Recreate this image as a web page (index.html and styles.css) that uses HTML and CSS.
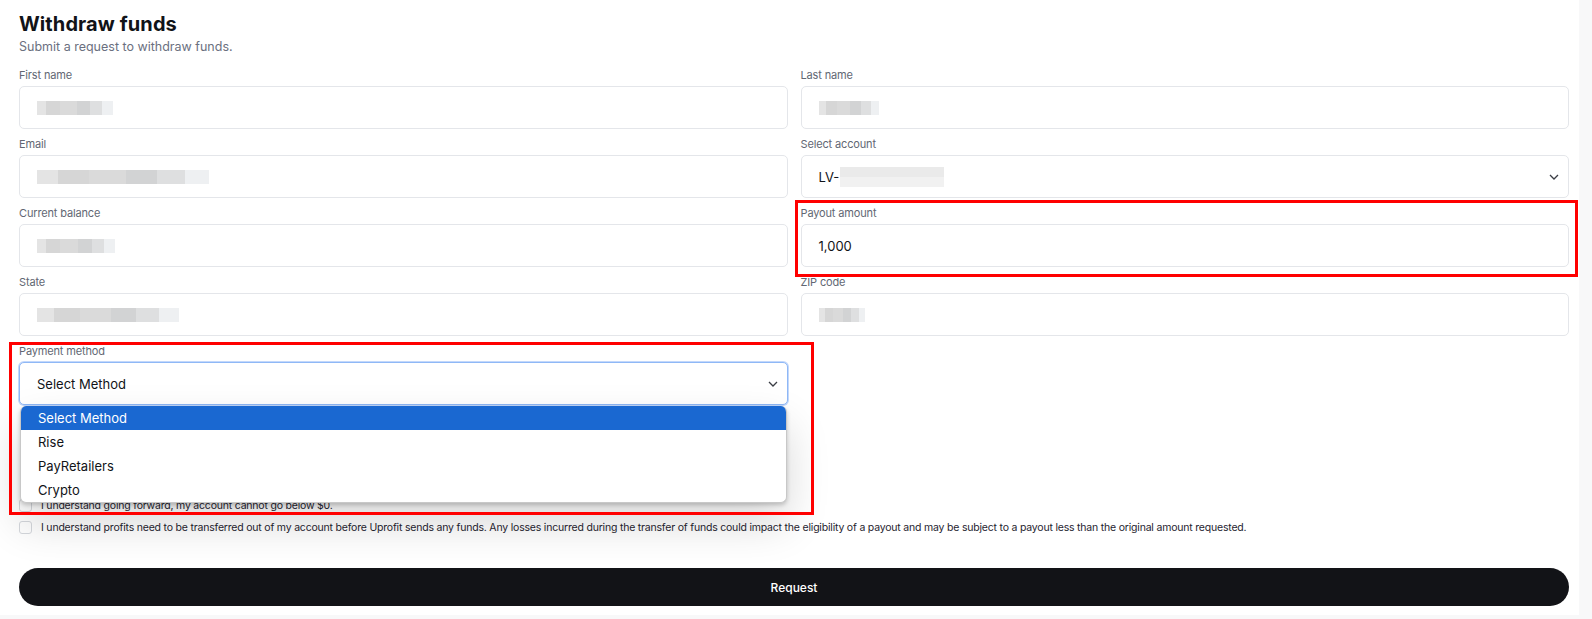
FILE: index.html
```html
<!DOCTYPE html>
<html lang="en">
<head>
    <meta charset="UTF-8" />
    <meta name="viewport" content="width=device-width, initial-scale=1.0"/>
    <title>Withdraw funds</title>
    <link rel="stylesheet" href="styles.css">
</head>
<body>

    <div class="card">
        <div class="title">Withdraw funds</div>
        <div class="subtitle">Submit a request to withdraw funds.</div>

        <div class="form-grid">
            <div class="field">
                <div class="label">First name</div>
                <div class="input"><span class="redact r-first"></span></div>
            </div>
            <div class="field">
                <div class="label">Last name</div>
                <div class="input"><span class="redact r-last"></span></div>
            </div>

            <div class="field">
                <div class="label">Email</div>
                <div class="input"><span class="redact r-email"></span></div>
            </div>
            <div class="field">
                <div class="label">Select account</div>
                <div class="input select">
                    <span class="value">LV-</span><span class="redact r-account"></span>
                    <svg class="chevron" width="10" height="6" viewBox="0 0 10 6"><path d="M1 1l4 4 4-4" fill="none" stroke="#3a3d44" stroke-width="1.3"/></svg>
                </div>
            </div>

            <div class="field">
                <div class="label">Current balance</div>
                <div class="input"><span class="redact r-balance"></span></div>
            </div>
            <div class="field marked marked-payout">
                <div class="label">Payout amount</div>
                <div class="input"><span class="value">1,000</span></div>
            </div>

            <div class="field">
                <div class="label">State</div>
                <div class="input"><span class="redact r-state"></span></div>
            </div>
            <div class="field">
                <div class="label">ZIP code</div>
                <div class="input"><span class="redact r-zip"></span></div>
            </div>

            <!-- select abierto -->
            <div class="field marked marked-method">
                <div class="label">Payment method</div>
                <div class="input select focused">
                    <span class="value">Select Method</span>
                    <svg class="chevron" width="10" height="6" viewBox="0 0 10 6"><path d="M1 1l4 4 4-4" fill="none" stroke="#3a3d44" stroke-width="1.3"/></svg>
                </div>
                <div class="dropdown">
                    <div class="option selected">Select Method</div>
                    <div class="option">Rise</div>
                    <div class="option">PayRetailers</div>
                    <div class="option">Crypto</div>
                </div>
            </div>
        </div>

        <div class="checks">
            <label class="check"><span class="box"></span>I understand going forward, my account cannot go below $0.</label>
            <label class="check"><span class="box"></span>I understand profits need to be transferred out of my account before Uprofit sends any funds. Any losses incurred during the transfer of funds could impact the eligibility of a payout and may be subject to a payout less than the original amount requested.</label>
        </div>

        <button class="request-button">Request</button>
    </div>

</body>
</html>
```

FILE: styles.css
```css
body {
    margin: 0;
    background: #f8f8f9;
    font-family: 'Inter', 'Liberation Sans', sans-serif;
    color: #111318;
}

.card {
    width: 1579px;
    height: 615px;
    box-sizing: border-box;
    background: #ffffff;
    padding: 11px 10px 8px 19px;
}

.title {
    font-size: 20px;
    font-weight: 700;
    line-height: 26px;
    letter-spacing: 0.1px;
}

.subtitle {
    font-size: 12.5px;
    line-height: 20px;
    color: #6b7080;
    margin-bottom: 10px;
}

.form-grid {
    display: grid;
    grid-template-columns: 1fr 1fr;
    column-gap: 13px;
    row-gap: 7px;
}

.field {
    position: relative;
}

.label {
    font-size: 11px;
    line-height: 16px;
    letter-spacing: -0.15px;
    color: #626773;
    margin-bottom: 3px;
}

.input {
    height: 43px;
    box-sizing: border-box;
    border: 1px solid #e4e6ea;
    border-radius: 5px;
    background: #fff;
    display: flex;
    align-items: center;
    padding: 0 17px;
    font-size: 13px;
    color: #111318;
}

.select .chevron {
    margin-left: auto;
    margin-right: -8px;
}

.input.focused {
    border-color: #8fb8f6;
    box-shadow: 0 0 0 1px #c3d8fb;
}

.redact {
    display: inline-block;
    height: 14px;
    background: linear-gradient(90deg,
        #e4e4e4 0 12%, #d6d6d6 12% 30%, #dadada 30% 52%,
        #d2d3d4 52% 70%, #dedfe0 70% 86%, #eef0f2 86% 100%);
}

.r-first { width: 76px; }
.r-last { width: 60px; }
.r-email { width: 172px; }
.r-balance { width: 78px; }
.r-state { width: 142px; }
.r-zip { width: 46px; }
.r-account {
    width: 104px;
    height: 20px;
    margin-left: 1px;
    background: linear-gradient(180deg, #eaeaea 0 50%, #f1f1f1 50% 100%);
}

/* lista desplegada */
.dropdown {
    position: absolute;
    top: calc(100% + 1px);
    left: 1px;
    right: 1px;
    background: #fff;
    border: 1px solid #c8c8c8;
    border-top: none;
    border-radius: 6px;
    overflow: hidden;
    z-index: 10;
    box-shadow: 0 2px 4px rgba(0, 0, 0, 0.2), 0 20px 44px rgba(0, 0, 0, 0.16);
}

.option {
    height: 24px;
    line-height: 24px;
    padding-left: 17px;
    font-size: 13px;
    color: #111318;
}

.option.selected {
    background: #1a68d1;
    color: #fff;
}

/* marcas rojas */
.marked::after {
    content: "";
    position: absolute;
    border: 3px solid #ff0000;
    z-index: 20;
    pointer-events: none;
}

.marked-payout::after {
    top: -5px;
    left: -6px;
    right: -9px;
    bottom: -10px;
}

.marked-method::after {
    top: -1px;
    left: -10px;
    right: -26px;
    bottom: -110px;
}

.checks {
    margin-top: 89px;
    display: flex;
    flex-direction: column;
}

.check {
    display: flex;
    align-items: center;
    gap: 9px;
    height: 22px;
    font-size: 10.5px;
    letter-spacing: -0.2px;
    color: #1f2430;
    white-space: nowrap;
}

.check .box {
    width: 13px;
    height: 13px;
    box-sizing: border-box;
    border: 1px solid #d5d8dd;
    border-radius: 3px;
    background: #fff;
    flex: 0 0 auto;
}

.request-button {
    display: block;
    width: 100%;
    height: 38px;
    margin-top: 30px;
    border: none;
    border-radius: 19px;
    background: #121317;
    color: #fff;
    font-family: inherit;
    font-size: 12px;
    font-weight: 500;
    cursor: pointer;
}
```
